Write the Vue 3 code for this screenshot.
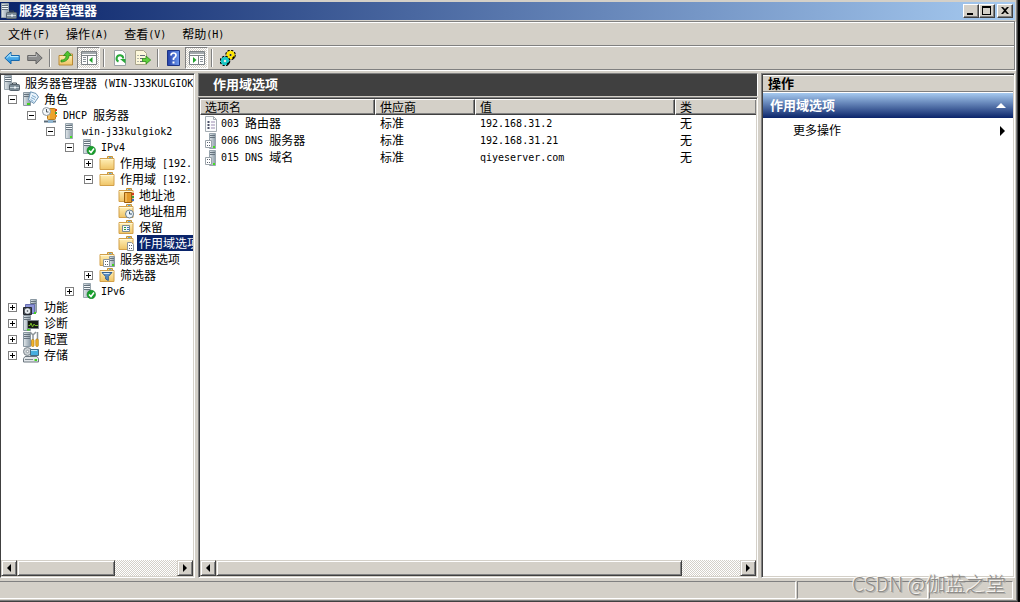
<script setup>
import { h } from 'vue'

// Splits mixed text so that half-width runs use the monospaced face.
const Mixed = (props) =>
  h(
    'span',
    { class: 'mixed' },
    props.text
      .split(/([\x20-\x7e]+)/)
      .filter(Boolean)
      .map((part) => (/^[\x20-\x7e]/.test(part) ? h('span', { class: 'half' }, part) : part))
  )
Mixed.props = ['text']

const menus = ['文件(F)', '操作(A)', '查看(V)', '帮助(H)']

const tools = [
  { icon: 'back', label: '后退' },
  { icon: 'forward', label: '前进' },
  null,
  { icon: 'up', label: '上一级' },
  { icon: 'tree-pane', label: '显示/隐藏控制台树', pressed: true },
  null,
  { icon: 'refresh', label: '刷新' },
  { icon: 'export', label: '导出列表' },
  null,
  { icon: 'help', label: '帮助' },
  { icon: 'action-pane', label: '显示/隐藏操作窗格', pressed: true },
  null,
  { icon: 'gears', label: '选项' },
]

const nodes = [
  { level: 0, icon: 'manager', text: '服务器管理器 (WIN-J33KULGIOK' },
  { level: 1, icon: 'roles', text: '角色', box: '-' },
  { level: 2, icon: 'dhcp', text: 'DHCP 服务器', box: '-' },
  { level: 3, icon: 'tower', text: 'win-j33kulgiok2', box: '-' },
  { level: 4, icon: 'server-ok', text: 'IPv4', box: '-' },
  { level: 5, icon: 'folder', text: '作用域 [192.', box: '+' },
  { level: 5, icon: 'folder', text: '作用域 [192.', box: '-' },
  { level: 6, icon: 'pool', text: '地址池' },
  { level: 6, icon: 'lease', text: '地址租用' },
  { level: 6, icon: 'reserve', text: '保留' },
  { level: 6, icon: 'scope-opt', text: '作用域选项', selected: true },
  { level: 5, icon: 'server-opt', text: '服务器选项' },
  { level: 5, icon: 'filter', text: '筛选器', box: '+' },
  { level: 4, icon: 'server-ok', text: 'IPv6', box: '+' },
  { level: 1, icon: 'features', text: '功能', box: '+' },
  { level: 1, icon: 'diagnose', text: '诊断', box: '+' },
  { level: 1, icon: 'config', text: '配置', box: '+' },
  { level: 1, icon: 'storage', text: '存储', box: '+' },
]

const columns = ['选项名', '供应商', '值', '类']
const rows = [
  { icon: 'page', name: '003 路由器', vendor: '标准', value: '192.168.31.2', type: '无' },
  { icon: 'page-server', name: '006 DNS 服务器', vendor: '标准', value: '192.168.31.21', type: '无' },
  { icon: 'page-server', name: '015 DNS 域名', vendor: '标准', value: 'qiyeserver.com', type: '无' },
]
</script>

<template>
  <div class="window">
    <svg class="defs" width="0" height="0" aria-hidden="true">
      <defs>
        <linearGradient id="g-steel"><stop offset="0" stop-color="#e2e8eb" /><stop offset="1" stop-color="#8c9ca8" /></linearGradient>
        <linearGradient id="g-folder" x2="0" y2="1"><stop offset="0" stop-color="#fff0b8" /><stop offset="1" stop-color="#efc466" /></linearGradient>
        <linearGradient id="g-blue" x2="0" y2="1"><stop offset="0" stop-color="#7fd0f8" /><stop offset="1" stop-color="#1c86d8" /></linearGradient>
        <linearGradient id="g-help"><stop offset="0" stop-color="#2440a8" /><stop offset="1" stop-color="#6f9af0" /></linearGradient>
      </defs>
      <symbol id="tower" viewBox="0 0 16 16">
        <path d="M4.500 .5h7v15h-7z" fill="url(#g-steel)" stroke="#98a5ae" />
        <path d="M5 2.500h6M5 4.500h6M5 6.500h6" stroke="#66737e" />
        <path d="M5 3.500h6M5 5.500h6" stroke="#f4f8fa" />
        <path d="M9 13h2v2H9z" fill="#42e020" />
      </symbol>
      <symbol id="manager" viewBox="0 0 16 16">
        <path d="M.5 .5h7v14h-7z" fill="url(#g-steel)" stroke="#98a5ae" />
        <path d="M1 2.500h6M1 4.500h6M1 6.500h6" stroke="#66737e" />
        <path d="M1 3.500h6M1 5.500h6" stroke="#f4f8fa" />
        <path d="M8.500 9.500V8h4v1.500" fill="none" stroke="#39464f" />
        <rect x="5.500" y="9.500" width="10" height="6" rx="1" fill="#7c8c97" stroke="#56636d" />
        <path d="M6 12.500h9" stroke="#c7d4dc" /><path d="M10 11.500h2v2h-2z" fill="#eef4f8" />
      </symbol>
      <symbol id="roles" viewBox="0 0 16 16">
        <path d="M.5 1.500h7v13h-7z" fill="url(#g-steel)" stroke="#8a98a2" />
        <path d="M1 3.500h6M1 5.500h6" stroke="#66737e" /><path d="M4 12h3v2H4z" fill="#42d020" />
        <path d="M7.500 .8 13 2.500 15.500 6 11 12.500 5.500 9z" fill="#e8f3fb" stroke="#6c94b4" />
        <path d="M9 4.500l4 2M8 6.500l4 2M7.500 8.500l3 2" stroke="#7aa7cb" />
      </symbol>
      <symbol id="dhcp" viewBox="0 0 16 16">
        <rect x="5.500" y="1.500" width="8" height="11" rx="1" fill="#eda22a" stroke="#b87a1c" />
        <path d="M7 2v10" stroke="#ffd980" /><path d="M13 2h2v2h-2z" fill="#d83a20" /><path d="M13 5h2v2h-2z" fill="#3f9c40" /><path d="M13 8h2v2h-2z" fill="#e58b20" />
        <circle cx="4.500" cy="4.500" r="4" fill="#f4f7f9" stroke="#8d979e" /><path d="M4.500 2v3h2" fill="none" stroke="#4f5a62" />
        <path d="M2 14.500h12" stroke="#5d6e7b" stroke-width="2" /><path d="M6 13h5v3H6z" fill="#8fb4cf" />
      </symbol>
      <symbol id="server-ok" viewBox="0 0 16 16">
        <path d="M3.500 .5h7v14h-7z" fill="url(#g-steel)" stroke="#98a5ae" />
        <path d="M4 2.500h6M4 4.500h6M4 6.500h6" stroke="#66737e" />
        <path d="M4 3.500h6M4 5.500h6" stroke="#f4f8fa" />
        <circle cx="11.300" cy="11.500" r="4.200" fill="#17a02c" stroke="#0b7a1d" stroke-width=".6" />
        <path d="M9 11.500l2 2 3-4" fill="none" stroke="#fff" stroke-width="1.600" />
      </symbol>
      <symbol id="folder" viewBox="0 0 16 16">
        <path d="M8.500 3V1.500h5V3" fill="#f8dc8c" stroke="#c59236" /><path d="M10 2h2.500v1H10z" fill="#5aa5e6" />
        <path d="M1 3.500h14v11H1z" fill="url(#g-folder)" stroke="#d2a04a" />
        <path d="M1.500 4.500h13" stroke="#fff8d8" />
      </symbol>
      <symbol id="pool" viewBox="0 0 16 16">
        <use href="#folder" />
        <path d="M6.500 5.500h7v10h-7z" fill="#e29a2c" stroke="#9a5e10" /><path d="M8 6v9" stroke="#ffd27a" />
        <path d="M14 6h2v2h-2z" fill="#d83a20" /><path d="M14 9h2v2h-2z" fill="#3f9c40" /><path d="M14 12h2v2h-2z" fill="#3a70c8" />
      </symbol>
      <symbol id="lease" viewBox="0 0 16 16">
        <use href="#folder" />
        <circle cx="11.500" cy="11" r="4" fill="#eef5fa" stroke="#687d8e" /><path d="M11.500 8.500V11h2.500" fill="none" stroke="#34516a" />
      </symbol>
      <symbol id="reserve" viewBox="0 0 16 16">
        <use href="#folder" />
        <path d="M4.500 6.500h7v6h-7z" fill="#f3f7fa" stroke="#7a8a94" />
        <path d="M6 8h2v1H6zM6 10h2v1H6z" fill="#2b9a3b" /><path d="M9 8h2v1H9zM9 10h2v1H9z" fill="#3973b8" />
      </symbol>
      <symbol id="scope-opt" viewBox="0 0 16 16">
        <use href="#folder" />
        <path d="M9.500 7.500h4l2 2v6h-6z" fill="#fff" stroke="#8b949a" />
        <path d="M11 10h1v1h-1zM13 10h1v1h-1zM11 13h1v1h-1zM13 13h1v1h-1z" fill="#5a6270" />
      </symbol>
      <symbol id="server-opt" viewBox="0 0 16 16">
        <use href="#folder" />
        <path d="M10.500 5.500h5v10h-5z" fill="url(#g-steel)" stroke="#8a98a2" /><path d="M11 7.500h4M11 9.500h4" stroke="#66737e" />
        <path d="M13 13h2v2h-2z" fill="#42d020" />
        <path d="M4.500 8.500h6v7h-6z" fill="#fff" stroke="#8b949a" />
        <path d="M6 10h1v1H6zM8 10h1v1H8zM6 13h1v1H6zM8 13h1v1H8z" fill="#5a6270" />
      </symbol>
      <symbol id="filter" viewBox="0 0 16 16">
        <use href="#folder" />
        <path d="M3 5.500h10L9.300 9.500v4l-2.600-1.500V9.500z" fill="#5b8fc4" stroke="#345f8f" /><path d="M4.500 6.500h6" stroke="#d5e8f6" />
      </symbol>
      <symbol id="features" viewBox="0 0 16 16">
        <path d="M7.500 .5h6v13h-6z" fill="url(#g-steel)" stroke="#8a98a2" /><path d="M8 2.500h5M8 4.500h5" stroke="#66737e" />
        <path d="M2.500 5.500h9v9h-9z" fill="#8d95d8" stroke="#666db0" />
        <path d="M.5 8.500h8v7h-8z" fill="#4a5058" stroke="#24282e" />
        <circle cx="4.500" cy="12" r="2.700" fill="#e7ecef" /><circle cx="4.500" cy="12" r=".8" fill="#3b4148" />
        <path d="M11 13h2v2h-2z" fill="#42d020" />
      </symbol>
      <symbol id="diagnose" viewBox="0 0 16 16">
        <path d="M.5 .5h7v15h-7z" fill="url(#g-steel)" stroke="#8a98a2" /><path d="M1 2.500h6M1 4.500h6" stroke="#66737e" />
        <path d="M4.500 5.500h11v8h-11z" fill="#141a14" stroke="#7b858c" />
        <path d="M5.500 10.500h1.500l1-2.500 1.500 4 1.500-3 1 1.500h3" fill="none" stroke="#74b827" /><path d="M4 14h3v1.500H4z" fill="#42d020" />
      </symbol>
      <symbol id="config" viewBox="0 0 16 16">
        <path d="M.5 1.500h7v14h-7z" fill="url(#g-steel)" stroke="#8a98a2" /><path d="M1 3.500h6M1 5.500h6M1 7.500h6" stroke="#66737e" />
        <path d="M7 1l3 3v5M10 4l3-3M14.500 1v8" fill="none" stroke="#8d9499" stroke-width="1.500" />
        <rect x="8.500" y="8.500" width="2.500" height="7" rx="1" fill="#f2b52a" stroke="#b27a10" stroke-width=".7" />
        <rect x="12.800" y="8" width="2.500" height="7.500" rx="1" fill="#f2b52a" stroke="#b27a10" stroke-width=".7" />
      </symbol>
      <symbol id="storage" viewBox="0 0 16 16">
        <circle cx="4.500" cy="4.500" r="4" fill="#cdd3d6" stroke="#7b858c" /><circle cx="4.500" cy="4.500" r="1.200" fill="#fff" stroke="#66727a" stroke-width=".6" />
        <path d="M7.500 2.500h8v6h-8z" fill="#46aee0" stroke="#456a82" /><path d="M8 3.500h6" stroke="#b8e6fa" />
        <path d="M2 9.500h12l1.500 2v3.500H.5v-3.500z" fill="#e2e6e9" stroke="#6d7880" /><path d="M2 12.500h8" stroke="#7d888f" /><path d="M11.500 12h2.500v2h-2.500z" fill="#42d020" />
      </symbol>
      <symbol id="page" viewBox="0 0 16 16">
        <path d="M.5 .5h8l3 3v12H.5z" fill="#fbfcfd" stroke="#a5adb3" /><path d="M8.500 .5v3h3" fill="none" stroke="#a5adb3" />
        <path d="M2.500 5h2v2h-2zM2.500 8h2v2h-2zM2.500 11h2v2h-2z" fill="#4d5268" /><path d="M6 6h4M6 9h4M6 12h4" stroke="#9a8ab0" />
      </symbol>
      <symbol id="page-server" viewBox="0 0 16 16">
        <path d="M4.500 .5h6v15h-6z" fill="url(#g-steel)" stroke="#98a5ae" /><path d="M5 2.500h5M5 4.500h5" stroke="#66737e" />
        <path d="M8 13h2v2H8z" fill="#42e020" />
        <path d="M.5 7.500h6v7h-6z" fill="#fff" stroke="#9aa3aa" />
        <path d="M2 9h1v1H2zM4 9h1v1H4zM2 12h1v1H2zM4 12h1v1H4z" fill="#5a6270" />
      </symbol>
      <symbol id="back" viewBox="0 0 16 16">
        <path d="M.8 8 7 2v3.500h8.300v5H7V14z" fill="url(#g-blue)" stroke="#1668ad" /><path d="M2.500 8 6.300 4.300v2.200h8" fill="none" stroke="#b8eaff" />
      </symbol>
      <symbol id="forward" viewBox="0 0 16 16">
        <path d="M15.200 8 9 2v3.500H.7v5H9V14z" fill="#8e8e8e" stroke="#666" /><path d="M1.500 6.500h8V4.300" fill="none" stroke="#bdbdbd" />
      </symbol>
      <symbol id="up" viewBox="0 0 16 16">
        <path d="M1 5.500h6l1-1.500h6.500v11H1z" fill="url(#g-folder)" stroke="#b98a36" />
        <path d="M3 10C7 10 8 8 8 5.500H5.500L9.500 1l4 4.500H11C11 9 8 12 3 12z" fill="#4fc42d" stroke="#248012" stroke-width=".7" />
      </symbol>
      <symbol id="tree-pane" viewBox="0 0 16 16">
        <path d="M.5 1.500h15v13H.5z" fill="#fff" stroke="#7d8387" /><path d="M1 3h14" stroke="#a2a9ad" stroke-width="2" /><path d="M1 5.500h14M6.500 6v8" stroke="#7d8387" />
        <path d="M2 7.500h3M2 9.500h3M2 11.500h3" stroke="#8a929a" /><path d="M11.500 7v6L8 10z" fill="#22a12c" />
      </symbol>
      <symbol id="action-pane" viewBox="0 0 16 16">
        <path d="M.5 1.500h15v13H.5z" fill="#fff" stroke="#7d8387" /><path d="M1 3h14" stroke="#a2a9ad" stroke-width="2" /><path d="M1 5.500h14M9.500 6v8" stroke="#7d8387" />
        <path d="M11 7.500h3M11 9.500h3M11 11.500h3" stroke="#8a929a" /><path d="M4 7v6l3.500-3z" fill="#22a12c" />
      </symbol>
      <symbol id="refresh" viewBox="0 0 16 16">
        <path d="M2.500 .5h8l3 3v12h-11z" fill="#fdfdfd" stroke="#9ba2a6" />
        <path d="M6.500 11.500A3.300 3.300 0 1 1 11.200 8.500" fill="none" stroke="#28a838" stroke-width="2" /><path d="M8 9h5.500v4.500z" fill="#28a838" />
      </symbol>
      <symbol id="export" viewBox="0 0 16 16">
        <path d="M.5 .5h8l3 3v11H.5z" fill="#fdf8da" stroke="#a9a48c" /><path d="M2.500 5.500h1M2.500 8.500h1M2.500 11.500h1M5 5.500h5M5 8.500h3M5 11.500h3" stroke="#66707c" />
        <path d="M7.500 8.500H11V6l4.700 4L11 14v-2.500H7.500z" fill="#5fd03e" stroke="#2c8b1b" stroke-width=".8" />
      </symbol>
      <symbol id="help" viewBox="0 0 16 16">
        <path d="M1.500 .5h12v15h-12z" fill="url(#g-help)" stroke="#1d3384" />
        <path d="M5 5.500Q5 3 7.500 3T10 5.300Q10 7 7.500 8.500V10" fill="none" stroke="#fff" stroke-width="1.700" /><path d="M6.500 11.500h2v2h-2z" fill="#fff" />
      </symbol>
      <symbol id="gears" viewBox="0 0 16 16">
        <circle cx="10.500" cy="5" r="4" fill="none" stroke="#000" stroke-width="2.600" stroke-dasharray="2 1.140" />
        <circle cx="10.500" cy="5" r="2.800" fill="none" stroke="#ffe600" stroke-width="3" /><circle cx="10.500" cy="5" r="1" fill="#222" />
        <path d="M12 8l2-2 1 2-2 1z" fill="#000" />
        <circle cx="5" cy="11" r="4" fill="none" stroke="#000" stroke-width="2.600" stroke-dasharray="2 1.140" />
        <circle cx="5" cy="11" r="2.800" fill="none" stroke="#18c8c8" stroke-width="3" /><circle cx="5" cy="11" r="1" fill="#eee" />
        <path d="M6.500 14l2-2 1 2-2 1z" fill="#000" />
      </symbol>
    </svg>

    <header class="title">
      <svg class="icon"><use href="#manager" /></svg>
      <h1>服务器管理器</h1>
      <div class="controls">
        <button aria-label="最小化"><svg viewBox="0 0 12 10"><path d="M2 7h6v2H2z" /></svg></button>
        <button aria-label="最大化"><svg viewBox="0 0 12 10"><path d="M1 0h9v9H1zM2 2v6h7V2z" fill-rule="evenodd" /></svg></button>
        <button class="close" aria-label="关闭"><svg viewBox="0 0 12 10"><path d="M2 1h2l2 2 2-2h2L7 4.500 10 8H8L6 6 4 8H2l3-3.500z" /></svg></button>
      </div>
    </header>

    <div class="bars">
      <nav class="menubar">
        <button v-for="m in menus" :key="m"><Mixed :text="m" /></button>
      </nav>
      <div class="toolbar" role="toolbar">
        <template v-for="(t, i) in tools" :key="i">
          <button v-if="t" :class="{ pressed: t.pressed }" :aria-label="t.label">
            <svg class="icon"><use :href="'#' + t.icon" /></svg>
          </button>
          <span v-else class="sep"></span>
        </template>
      </div>
    </div>

    <main class="panes">
      <aside class="tree-pane">
        <ul class="tree" role="tree">
          <li v-for="(n, i) in nodes" :key="i" role="treeitem" :style="{ '--level': n.level }">
            <button v-if="n.box" class="box" :class="{ plus: n.box === '+' }" :aria-label="n.box === '+' ? '展开' : '折叠'"></button>
            <svg class="icon"><use :href="'#' + n.icon" /></svg>
            <span class="label" :class="{ selected: n.selected }"><Mixed :text="n.text" /></span>
          </li>
        </ul>
        <div class="scroll">
          <button class="arrow" aria-label="向左滚动"><svg viewBox="0 0 8 8"><path d="M6 0v8L2 4z" /></svg></button>
          <div class="track"><div class="thumb tree-thumb"></div></div>
          <button class="arrow" aria-label="向右滚动"><svg viewBox="0 0 8 8"><path d="M2 0v8l4-4z" /></svg></button>
        </div>
      </aside>

      <section class="center">
        <h2>作用域选项</h2>
        <div class="list">
          <table>
            <colgroup><col class="c-name" /><col class="c-vendor" /><col class="c-value" /><col /></colgroup>
            <thead>
              <tr><th v-for="c in columns" :key="c" scope="col">{{ c }}</th></tr>
            </thead>
            <tbody>
              <tr v-for="r in rows" :key="r.name">
                <td><span class="name"><svg class="icon"><use :href="'#' + r.icon" /></svg><span class="cell"><Mixed :text="r.name" /></span></span></td>
                <td><span class="cell">{{ r.vendor }}</span></td>
                <td><span class="cell"><Mixed :text="r.value" /></span></td>
                <td><span class="cell">{{ r.type }}</span></td>
              </tr>
            </tbody>
          </table>
          <div class="scroll">
            <button class="arrow" aria-label="向左滚动"><svg viewBox="0 0 8 8"><path d="M6 0v8L2 4z" /></svg></button>
            <div class="track"><div class="thumb list-thumb"></div></div>
            <button class="arrow" aria-label="向右滚动"><svg viewBox="0 0 8 8"><path d="M2 0v8l4-4z" /></svg></button>
          </div>
        </div>
      </section>

      <aside class="actions">
        <h2>操作</h2>
        <button class="group"><span>作用域选项</span><svg viewBox="0 0 10 5"><path d="M5 0l5 5H0z" /></svg></button>
        <button class="more"><span>更多操作</span><svg viewBox="0 0 5 10"><path d="M0 0l5 5-5 5z" /></svg></button>
      </aside>
    </main>

    <footer class="status"><span></span><span></span><span></span></footer>
    <div class="watermark">CSDN @伽蓝之堂</div>
  </div>
</template>

<style>
html,
body {
  background: #000;
}
.half {
  font-family: 'DejaVu Sans Mono', 'Liberation Mono', monospace;
  font-size: 10px;
  line-height: 12px;
  vertical-align: 1px;
}
.mixed {
  white-space: pre;
}
</style>

<style scoped>
.window {
  position: relative;
  box-sizing: border-box;
  height: 100vh;
  margin-right: 2px;
  padding: 2px 1px 2px 0;
  display: flex;
  flex-direction: column;
  overflow: hidden;
  background: #d4d0c8;
  border-right: 1px solid #404040;
  border-bottom: 1px solid #404040;
  box-shadow: inset -1px -1px #808080;
  color: #000;
  font: 12px/16px 'Liberation Sans', 'Noto Sans CJK SC', sans-serif;
}
.window > * {
  margin-right: 1px;
}
.defs {
  position: absolute;
}
.icon {
  width: 16px;
  height: 16px;
  flex: none;
  display: block;
}
button {
  font: inherit;
  color: inherit;
  background: none;
  border: 0;
  padding: 0;
  margin: 0;
}
h1,
h2 {
  margin: 0;
  font-size: 13px;
  font-weight: bold;
}

.title {
  height: 18px;
  flex: none;
  display: flex;
  align-items: center;
  gap: 2px;
  padding: 0 2px 0 1px;
  background: linear-gradient(90deg, #0a246a, #a6caf0);
  color: #fff;
}
.controls {
  display: flex;
  margin-left: auto;
}
.controls button {
  width: 16px;
  height: 14px;
  display: grid;
  place-items: center;
  background: #d4d0c8;
  border: 1px solid;
  border-color: #fff #404040 #404040 #fff;
  box-shadow: inset -1px -1px #808080;
}
.controls svg {
  width: 12px;
  height: 10px;
}
.controls .close {
  margin-left: 2px;
}

.bars {
  flex: none;
  margin-top: 1px;
  border: solid #808080;
  border-width: 1px 1px 1px 0;
  box-shadow: 1px 1px #fff;
}
.menubar {
  display: flex;
  height: 24px;
  box-sizing: border-box;
  border-top: 1px solid #fff;
  border-bottom: 1px solid #808080;
}
.menubar button {
  padding: 2px 8px 0;
}
.toolbar {
  display: flex;
  height: 23px;
  box-sizing: border-box;
  border-top: 1px solid #fff;
}
.toolbar button {
  width: 23px;
  box-sizing: border-box;
  display: grid;
  place-items: center;
}
.toolbar .pressed {
  border: 1px solid;
  border-color: #808080 #fff #fff #808080;
  background: repeating-conic-gradient(#fff 0 25%, #d4d0c8 0 50%) 0 0 / 2px 2px;
}
.sep {
  width: 2px;
  margin: 2px 3px;
  box-sizing: border-box;
  border-left: 1px solid #808080;
  border-right: 1px solid #fff;
}

.panes {
  flex: 1;
  min-height: 0;
  margin-top: 3px;
  display: grid;
  grid-template-columns: 195px minmax(0, 1fr) 254px;
  gap: 3px;
}
.tree-pane,
.list,
.actions {
  display: flex;
  flex-direction: column;
  min-width: 0;
  border: 1px solid;
  border-color: #808080 #fff #fff #808080;
  background: #fff;
  box-shadow: inset 1px 1px #404040, inset -1px -1px #d4d0c8;
}
.tree-pane {
  padding: 1px 1px 1px 0;
  border-left-color: #404040;
  box-shadow: inset 0 1px #404040, inset -1px -1px #d4d0c8;
}
.tree {
  flex: 1;
  margin: 0;
  padding: 0;
  list-style: none;
  overflow: hidden;
}
.tree li {
  display: flex;
  align-items: center;
  height: 16px;
  padding-left: calc(var(--level) * 19px + 3px);
}
.box {
  width: 9px;
  height: 9px;
  margin: 0 6px 0 -15px;
  flex: none;
  border: 1px solid #808080;
  background: linear-gradient(#000, #000) center / 5px 1px no-repeat;
}
.box.plus {
  background: linear-gradient(#000, #000) center / 5px 1px no-repeat, linear-gradient(#000, #000) center / 1px 5px no-repeat;
}
.label {
  height: 16px;
  margin-left: 3px;
  padding: 0 2px;
  line-height: 18px;
  white-space: nowrap;
}
.selected {
  background: #0a246a;
  color: #fff;
}

.scroll {
  display: flex;
  height: 16px;
  flex: none;
}
.arrow,
.thumb {
  box-sizing: border-box;
  background: #d4d0c8;
  border: 1px solid;
  border-color: #d4d0c8 #404040 #404040 #d4d0c8;
  box-shadow: inset 1px 1px #fff, inset -1px -1px #808080;
}
.arrow {
  width: 16px;
  display: grid;
  place-items: center;
}
.arrow svg {
  width: 8px;
  height: 8px;
}
.track {
  flex: 1;
  display: flex;
  background: repeating-conic-gradient(#fff 0 25%, #d4d0c8 0 50%) 0 0 / 2px 2px;
}
.tree-thumb {
  width: 61%;
}
.list-thumb {
  width: 89%;
}

.center {
  display: flex;
  flex-direction: column;
  min-width: 0;
}
.center h2 {
  height: 23px;
  box-sizing: border-box;
  padding: 3px 14px;
  background: #404040;
  border-top: 1px solid #808080;
  border-left: 1px solid #808080;
  border-right: 1px solid #fff;
  color: #fff;
  line-height: 16px;
}
.list {
  flex: 1;
  margin-top: 1px;
  padding: 1px;
}
table {
  width: 100%;
  table-layout: fixed;
  border-collapse: separate;
  border-spacing: 0;
  margin-bottom: auto;
}
.c-name {
  width: 175px;
}
.c-vendor {
  width: 100px;
}
.c-value {
  width: 200px;
}
th {
  height: 16px;
  box-sizing: border-box;
  padding: 2px 4px 0;
  background: #d4d0c8;
  border: 1px solid;
  border-color: #fff #404040 #404040 #fff;
  box-shadow: inset -1px -1px #808080;
  font-weight: normal;
  line-height: 12px;
  text-align: left;
}
th:last-child {
  border-right: 0;
}
td {
  height: 17px;
  padding: 0 5px;
  white-space: nowrap;
}
.cell {
  display: block;
  height: 17px;
  line-height: 19px;
}
.name {
  display: flex;
  align-items: center;
}

.actions {
  padding: 1px;
}
.actions h2 {
  height: 17px;
  padding-left: 5px;
  background: #d4d0c8;
  border-top: 1px solid #fff;
  border-bottom: 1px solid #808080;
  box-sizing: border-box;
  line-height: 16px;
}
.actions button {
  display: flex;
  align-items: center;
  justify-content: space-between;
}
.actions .group {
  height: 25px;
  margin-top: 1px;
  padding: 0 7px;
  color: #fff;
  background: linear-gradient(#a6caf0, #0a246a);
  font-size: 13px;
  font-weight: bold;
}
.group svg {
  width: 10px;
  height: 5px;
  fill: #fff;
}
.actions .more {
  height: 24px;
  padding: 1px 8px 0 30px;
}
.more svg {
  width: 5px;
  height: 10px;
}

.status {
  flex: none;
  height: 18px;
  margin-top: 3px;
  display: grid;
  grid-template-columns: minmax(0, 1fr) 131px 84px;
  gap: 1px;
  padding-right: 2px;
}
.status span {
  border: 1px solid;
  border-color: #808080 #fff #fff #808080;
}
.status span:first-child {
  border-left: 0;
}
.watermark {
  position: absolute;
  right: 10px;
  bottom: 4px;
  color: #8f8d8a;
  font: 300 20px/26px 'Noto Sans CJK SC', sans-serif;
  text-shadow: -1px -1px #f4f3f0, 1px 1px #b5b2ac;
}
</style>
